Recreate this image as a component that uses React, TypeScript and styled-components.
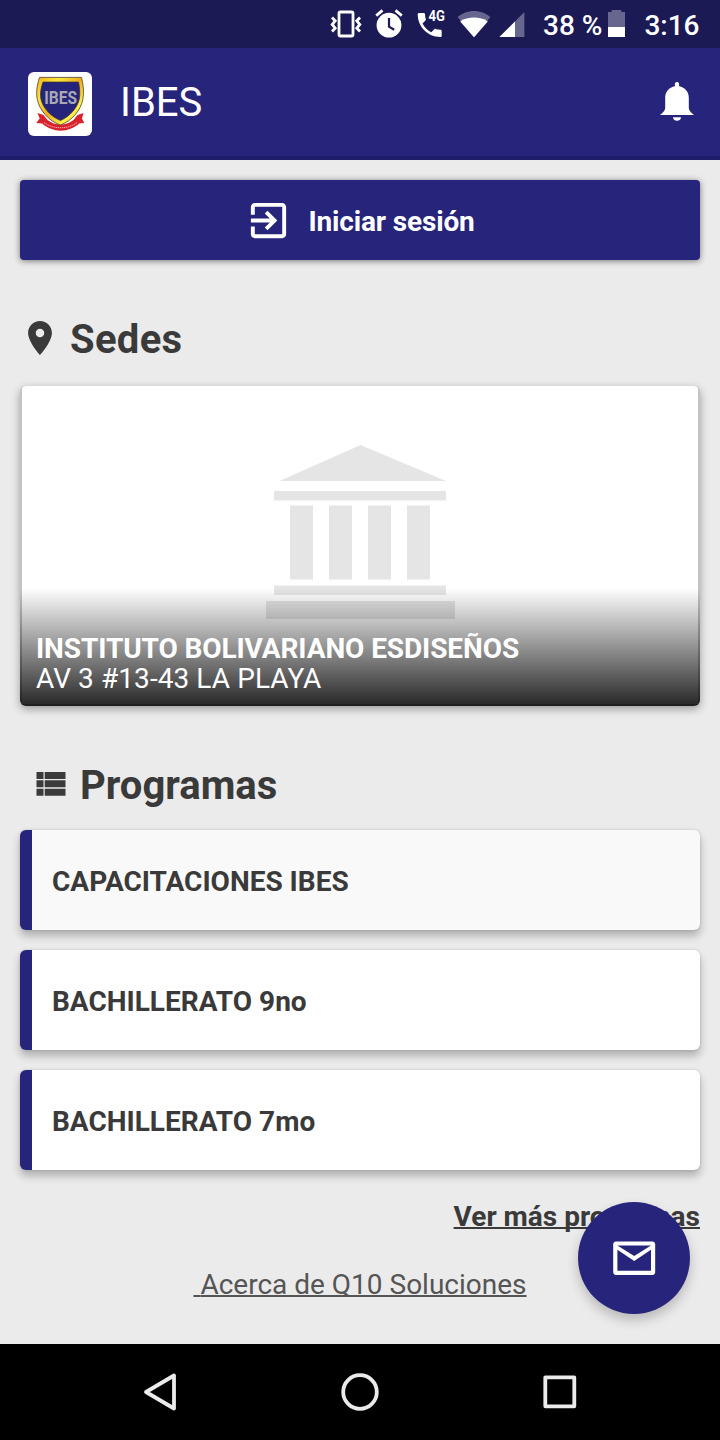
import React from "react";
import styled, { createGlobalStyle } from "styled-components";

const NAVY = "#26247b";
const DARK = "#3a3a3a";

const programs = [
	{ id: 1, name: "CAPACITACIONES IBES", pressed: true },
	{ id: 2, name: "BACHILLERATO 9no", pressed: false },
	{ id: 3, name: "BACHILLERATO 7mo", pressed: false },
];

const StatusBar: React.FC = () => (
	<StatusContainer>
		<svg width="32" height="48" viewBox="330 0 32 48">
			<g fill="none" stroke="#fff" strokeWidth="2.8">
				<rect x="339" y="12" width="14" height="24" rx="1.5" />
				<path d="M332 17.5l3.2 3.4-3 3.6 3 3.6-3.2 3.4M360 17.5l-3.2 3.4 3 3.6-3 3.6 3.2 3.4" />
			</g>
		</svg>
		<svg width="30" height="48" viewBox="374 0 30 48">
			<circle cx="389" cy="25.2" r="12.4" fill="#fff" />
			<path
				d="M376.2 15.6l6.3-5.2M401.8 15.6l-6.3-5.2"
				stroke="#fff"
				strokeWidth="2.8"
			/>
			<path
				d="M389 18v8.6l5.2 3.2"
				fill="none"
				stroke="#1b1a54"
				strokeWidth="2.2"
			/>
		</svg>
		<svg width="30" height="48" viewBox="416 0 30 48">
			<path
				transform="translate(413.7 9) scale(1.333)"
				fill="#fff"
				d="M6.62 10.79c1.44 2.83 3.76 5.14 6.59 6.59l2.2-2.2c.27-.27.67-.36 1.02-.24 1.12.37 2.33.57 3.57.57.55 0 1 .45 1 1V20c0 .55-.45 1-1 1-9.39 0-17-7.61-17-17 0-.55.45-1 1-1h3.5c.55 0 1 .45 1 1 0 1.25.2 2.45.57 3.57.11.35.03.74-.25 1.02l-2.2 2.2z"
			/>
			<text
				x="428.4"
				y="21"
				fill="#fff"
				fontSize="14.5"
				fontWeight="700"
				textLength="16.4"
				lengthAdjust="spacingAndGlyphs"
			>
				4G
			</text>
		</svg>
		<svg width="34" height="48" viewBox="457 0 34 48">
			<path
				d="M474 37.2L457.6 17C462 13.2 468 11 474 11s12 2.2 16.4 6z"
				fill="#67668f"
			/>
			<path
				d="M474 37.2L460.2 21.4C464 18.8 469 17.6 474 17.6s10 1.2 13.8 3.8z"
				fill="#fff"
			/>
		</svg>
		<svg width="26" height="48" viewBox="499 0 26 48">
			<path d="M499.4 37h25V12z" fill="#67668f" />
			<path d="M499.4 37H515V21.4z" fill="#fff" />
		</svg>
		<StatusText $left={8}>38 %</StatusText>
		<svg width="18" height="48" viewBox="608 0 18 48">
			<path d="M608 12h3.7v-2h9.6v2h3.7v15h-17z" fill="#67668f" />
			<path d="M608 27h17v10h-17z" fill="#fff" />
		</svg>
		<StatusText $left={8}>3:16</StatusText>
	</StatusContainer>
);

const Logo: React.FC = () => (
	<LogoBox>
		<svg width="64" height="64" viewBox="0 0 64 64">
			<defs>
				<linearGradient id="gold" x1="0" y1="0" x2="1" y2="1">
					<stop offset="0" stopColor="#f3ae1c" />
					<stop offset="0.25" stopColor="#fbe63c" />
					<stop offset="0.5" stopColor="#efac20" />
					<stop offset="0.75" stopColor="#fff04a" />
					<stop offset="1" stopColor="#f4bd20" />
				</linearGradient>
			</defs>
			<path
				d="M9.500 41l6 2 4 5c8 6 18 6 26 0l4-5 6-2-1.500 5.500 2.200 4.500-5 .5c-10 9.500-27 9.500-37 0l-6-.5 3.500-4.500z"
				fill="#d8232c"
			/>
			<path
				d="M16 50.500c9 7 24 7 33 0"
				fill="none"
				stroke="#f3a3a4"
				strokeWidth="1"
				strokeDasharray="1.5 .6"
			/>
			<path
				d="M11.5 5.4h42C55.7 14 56 21 54.8 27.5 52.8 38 44 49 32.4 53 20.5 49 11.5 38 9.3 27.5 8 21 8.700 14 11.500 5.400z"
				fill="url(#gold)"
				stroke="#4b3e2b"
				strokeWidth=".8"
			/>
			<path
				d="M15 10h35.5C52 17 52.2 22 51.3 27 49.5 35.5 42 44.500 32.400 48.500 22.500 44.500 14.700 35.500 12.900 27 12 22 12.500 17 15 10z"
				fill="#25247a"
				stroke="#3c3430"
				strokeWidth=".7"
			/>
			<text
				x="16.2"
				y="32.2"
				fill="#a9a9b4"
				fontSize="18.5"
				fontWeight="700"
				textLength="32.8"
				lengthAdjust="spacingAndGlyphs"
			>
				IBES
			</text>
		</svg>
	</LogoBox>
);

const BuildingIcon: React.FC = () => (
	<svg width="190" height="174" viewBox="265 445 190 174" fill="#e5e5e5">
		<path d="M360.5 445l85.5 36H279.5z" />
		<path d="M274 491h172v9.5H274z" />
		<path d="M290 505.5h23v74h-23zM329 505.5h23v74h-23zM368 505.5h23v74h-23zM407 505.5h23v74h-23z" />
		<path d="M274 585.5h172v9.5H274zM266 601h189v18H266z" />
	</svg>
);

const App: React.FC = () => {
	return (
		<Screen>
			<GlobalStyle />
			<StatusBar />
			<Header>
				<Logo />
				<Title>IBES</Title>
				<BellIcon width="36" height="40" viewBox="0 0 36 40">
					<path d="M18 0c1.3 0 2.1.8 2.1 2v2.2C26 5.3 29.8 10 29.8 15.5V26c0 2.5 2.200 4.600 5.200 7H1c3-2.400 5.200-4.500 5.200-7V15.500C6.200 10 10 5.300 15.900 4.200V2c0-1.200.8-2 2.100-2z" />
					<path d="M14 35.2h8c0 2-1.6 3.6-4 3.6s-4-1.6-4-3.6z" />
				</BellIcon>
			</Header>
			<Content>
				<LoginButton>
					<svg width="47" height="47" viewBox="0 0 24 24" fill="#fff">
						<path d="M10.09 15.59L11.5 17l5-5-5-5-1.41 1.41L12.67 11H3v2h9.67l-2.58 2.59zM19 3H5c-1.11 0-2 .9-2 2v4h2V5h14v14H5v-4H3v4c0 1.1.89 2 2 2h14c1.1 0 2-.9 2-2V5c0-1.1-.9-2-2-2z" />
					</svg>
					<span>Iniciar sesión</span>
				</LoginButton>

				<Heading $indent={8} $gap={18} $spacing={0.3}>
					<svg width="24" height="34" viewBox="5 2 14 20" fill={DARK}>
						<path d="M12 2C8.13 2 5 5.13 5 9c0 5.25 7 13 7 13s7-7.75 7-13c0-3.87-3.13-7-7-7zm0 9.5c-1.38 0-2.5-1.12-2.5-2.5s1.12-2.5 2.5-2.5 2.5 1.12 2.5 2.5-1.12 2.5-2.5 2.5z" />
					</svg>
					<span>Sedes</span>
				</Heading>
				<CampusCard>
					<CampusImage>
						<BuildingIcon />
					</CampusImage>
					<CampusCaption>
						<CampusName>INSTITUTO BOLIVARIANO ESDISEÑOS</CampusName>
						<CampusAddress>AV 3 #13-43 LA PLAYA</CampusAddress>
					</CampusCaption>
				</CampusCard>

				<Heading $indent={16} $gap={14} $spacing={0}>
					<svg width="30" height="34" viewBox="0 0 30 34" fill={DARK}>
						<path d="M.5 5h7v7h-7zM8.700 5h20.800v7H8.700zM.5 13.300h7v7h-7zM8.700 13.300h20.800v7H8.700zM.5 21.800h7v7h-7zM8.700 21.800h20.800v7H8.700z" />
					</svg>
					<span>Programas</span>
				</Heading>
				<ProgramList>
					{programs.map((program) => (
						<ProgramItem key={program.id} $pressed={program.pressed}>
							{program.name}
						</ProgramItem>
					))}
				</ProgramList>
				<MoreLink>Ver más programas</MoreLink>
				<AboutLink>{"\u00a0"}Acerca de Q10 Soluciones</AboutLink>
				<MailButton>
					<svg width="50.4" height="50.4" viewBox="0 0 24 24" fill="#fff">
						<path d="M20.7 4H3.3C2.6 4 2 4.6 2 5.3v13.4c0 .7.6 1.3 1.3 1.3h17.4c.7 0 1.3-.6 1.3-1.3V5.3c0-.7-.6-1.3-1.3-1.3zM20 18H4V8l8 5.300L20 8v10zm-8-7L4 6h16l-8 5z" />
					</svg>
				</MailButton>
			</Content>
			<NavBar>
				<svg width="40" height="40" viewBox="0 0 40 40">
					<path d="M6 20L34 3.5v33z" />
				</svg>
				<svg width="40" height="40" viewBox="0 0 40 40">
					<circle cx="20" cy="20" r="16.8" />
				</svg>
				<svg width="40" height="40" viewBox="0 0 40 40">
					<rect x="5.3" y="5.3" width="29" height="29" />
				</svg>
			</NavBar>
		</Screen>
	);
};
export default App;

const GlobalStyle = createGlobalStyle`
	body {
		margin: 0;
		font-family: Roboto, sans-serif;
	}
	svg {
		display: block;
		flex: none;
	}
`;

const Screen = styled.div`
	display: flex;
	flex-direction: column;
	width: 720px;
	height: 1440px;
	overflow: hidden;
	background: #ebebeb;
`;

const StatusContainer = styled.div`
	display: flex;
	align-items: center;
	gap: 10px;
	box-sizing: border-box;
	height: 48px;
	padding-left: 330px;
	background: #1b1a54;

	svg:nth-of-type(1),
	svg:nth-of-type(2) {
		margin-right: 2px;
	}
	svg:nth-of-type(3) {
		margin-right: 1px;
	}
	svg:nth-of-type(4) {
		margin-right: -2px;
	}
	svg:nth-of-type(6) {
		margin-left: -4px;
	}
`;

const StatusText = styled.span<{ $left: number }>`
	margin-left: ${({ $left }) => $left}px;
	padding-top: 3px;
	color: #fff;
	font-size: 28px;
	font-weight: 500;
	line-height: 48px;
	white-space: nowrap;
`;

const Header = styled.header`
	display: flex;
	align-items: center;
	box-sizing: border-box;
	height: 112px;
	padding: 0 25px 0 28px;
	background: linear-gradient(#1f1d69, #1f1d69) bottom / 100% 4px no-repeat
		${NAVY};
`;

const LogoBox = styled.div`
	width: 64px;
	height: 64px;
	border-radius: 6px;
	background: #fff;
`;

const Title = styled.h1`
	flex: 1;
	margin: 0 0 0 28px;
	padding-bottom: 2px;
	color: #fff;
	font-size: 40px;
	font-weight: 400;
	line-height: 48px;
`;

const BellIcon = styled.svg`
	margin-bottom: 4px;
	fill: #fff;
`;

const Content = styled.main`
	position: relative;
	display: flex;
	flex-direction: column;
	box-sizing: border-box;
	height: 1184px;
	padding: 20px 20px 0;
`;

const LoginButton = styled.button`
	display: flex;
	align-items: center;
	justify-content: center;
	gap: 16px;
	height: 80px;
	padding: 0;
	border: 0;
	border-radius: 4px;
	background: ${NAVY};
	box-shadow: 0 1px 6px rgba(0, 0, 0, 0.5);
	color: #fff;
	font-family: inherit;
	font-size: 28px;
	font-weight: 700;
	letter-spacing: -0.15px;

	span {
		padding-top: 2px;
	}
`;

const Heading = styled.h2<{
	$indent: number;
	$gap: number;
	$spacing: number;
}>`
	display: flex;
	align-items: center;
	gap: ${({ $gap }) => $gap}px;
	height: 48px;
	margin: 54px 0 0;
	padding-left: ${({ $indent }) => $indent}px;
	color: ${DARK};
	font-size: 40px;
	font-weight: 700;
	letter-spacing: ${({ $spacing }) => $spacing}px;
	line-height: 48px;

	span {
		padding-top: 4px;
	}
`;

const CampusCard = styled.section`
	position: relative;
	height: 320px;
	margin-top: 24px;
	border-radius: 6px;
	overflow: hidden;
	background: #c4c4c4;
	box-shadow: 0 3px 8px rgba(0, 0, 0, 0.35);
`;

const CampusImage = styled.div`
	display: flex;
	justify-content: center;
	box-sizing: border-box;
	height: 318px;
	margin: 0 2px;
	padding-top: 59px;
	border-radius: 4px 4px 0 0;
	background: #fff;
`;

const CampusCaption = styled.div`
	position: absolute;
	inset: auto 0 0;
	display: flex;
	flex-direction: column;
	justify-content: flex-end;
	box-sizing: border-box;
	height: 118px;
	padding: 0 16px 12px;
	background: linear-gradient(
		rgba(0, 0, 0, 0),
		rgba(0, 0, 0, 0.85)
	);
	color: #fff;
	font-size: 28px;
	line-height: 30px;
`;

const CampusName = styled.strong`
	letter-spacing: -0.09px;
`;

const CampusAddress = styled.span`
	letter-spacing: 0.08px;
`;

const ProgramList = styled.div`
	display: flex;
	flex-direction: column;
	gap: 20px;
	margin-top: 22px;
`;

const ProgramItem = styled.div<{ $pressed: boolean }>`
	box-sizing: border-box;
	height: 100px;
	padding: 1px 20px 0;
	border-left: 12px solid ${NAVY};
	border-radius: 6px;
	background: ${({ $pressed }) => ($pressed ? "#f9f9f9" : "#fff")};
	box-shadow: 0 6px 8px rgba(0, 0, 0, 0.25), 0 0 3px rgba(0, 0, 0, 0.15);
	color: ${DARK};
	font-size: 28px;
	font-weight: 700;
	line-height: 101px;
`;

const MoreLink = styled.a`
	align-self: flex-end;
	margin-top: 31px;
	color: ${DARK};
	font-size: 28px;
	font-weight: 700;
	line-height: 32px;
	text-decoration: underline;
	text-decoration-thickness: 2px;
	text-decoration-skip-ink: none;
`;

const AboutLink = styled.a`
	align-self: center;
	margin-top: 36px;
	color: #555;
	font-size: 28px;
	line-height: 32px;
	text-decoration: underline;
	text-decoration-thickness: 2px;
	text-decoration-skip-ink: none;
`;

/* floats over the links at the bottom of the page */
const MailButton = styled.button`
	position: absolute;
	right: 30px;
	bottom: 30px;
	display: flex;
	align-items: center;
	justify-content: center;
	width: 112px;
	height: 112px;
	padding: 0;
	border: 0;
	border-radius: 50%;
	background: ${NAVY};
	box-shadow: 0 6px 12px rgba(0, 0, 0, 0.22);
`;

const NavBar = styled.nav`
	display: flex;
	align-items: center;
	justify-content: space-between;
	box-sizing: border-box;
	height: 96px;
	padding: 0 140px;
	background: #000;

	svg {
		fill: none;
		stroke: #ebebeb;
		stroke-width: 3.8;
		stroke-linejoin: round;
	}
`;
